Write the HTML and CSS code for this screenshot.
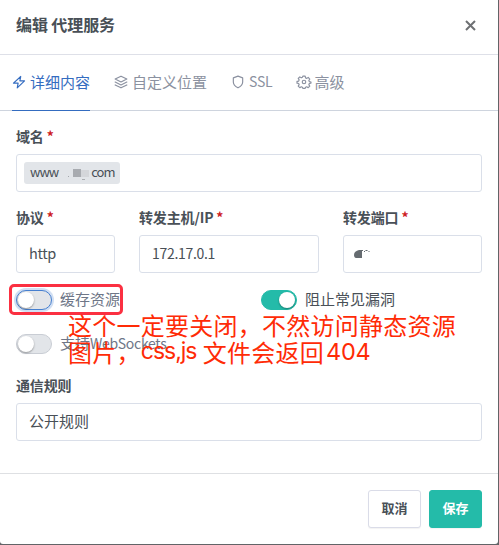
FILE: index.html
```html
<!DOCTYPE html>
<html lang="zh-CN">
<head>
    <meta charset="UTF-8">
    <meta name="viewport" content="width=device-width, initial-scale=1.0">
    <title>编辑 代理服务</title>
    <link rel="stylesheet" href="styles.css">
</head>
<body>
    <div class="modal">
        <div class="modal-header">
            <h1>编辑 代理服务</h1>
            <button class="close" aria-label="关闭">
                <svg width="11" height="11" viewBox="0 0 11 11"><path d="M1 1l9 9M10 1l-9 9"/></svg>
            </button>
        </div>

        <div class="tabs">
            <a class="tab active">
                <svg class="icon" viewBox="0 0 24 24"><path d="M15 2.5L2.5 14H10.500L9 22L21.500 10H13.500Z"/></svg>
                <span>详细内容</span>
            </a>
            <a class="tab">
                <svg class="icon" viewBox="0 0 24 24"><path d="M12 2L2 7l10 5 10-5zM2 12l10 5 10-5M2 17l10 5 10-5"/></svg>
                <span>自定义位置</span>
            </a>
            <a class="tab">
                <svg class="icon" viewBox="0 0 24 24"><path d="M12 22s8-4 8-10V5l-8-3-8 3v7c0 6 8 10 8 10z"/></svg>
                <span class="ssl">SSL</span>
            </a>
            <a class="tab">
                <svg class="icon gear" viewBox="0 0 24 24"><circle cx="12" cy="12" r="3"/><path d="M10 2h4l.7 2.9 2 .9 2.5-1.6 2.7 2.8-1.6 2.4.8 2L24 12l-.1 2-2.8.6-.8 2 1.6 2.4-2.7 2.8-2.5-1.6-2 .8L14 23h-4l-.7-2-2-.8-2.5 1.6L2.1 19l1.6-2.4-.8-2L0 14v-3l2.9-.6.8-2L2.1 6l2.7-2.8 2.5 1.6 2-.8z"/></svg>
                <span>高级</span>
            </a>
        </div>

        <div class="modal-body">
            <label class="label">域名 <span class="required">*</span></label>
            <div class="input tags">
                <span class="tag">
                    <span>www</span>
                    <svg width="34" height="18" viewBox="0 0 34 18">
                        <path d="M11 12h1v1h-1z" fill="#a3a7ac"/>
                        <path d="M16 5h8v8h-8z" fill="#a8abb0"/>
                        <path d="M24 6h8v7h-8z" fill="#d4d6da"/>
                        <path d="M25 15h3v1h-3z" fill="#aaadb1"/>
                    </svg>
                    <span>com</span>
                </span>
            </div>

            <div class="row">
                <div>
                    <label class="label">协议 <span class="required">*</span></label>
                    <div class="input select"><span class="http">http</span></div>
                </div>
                <div>
                    <label class="label">转发主机/IP <span class="required">*</span></label>
                    <div class="input"><span class="host">172.17.0.1</span></div>
                </div>
                <div>
                    <label class="label">转发端口 <span class="required">*</span></label>
                    <div class="input port">
                        <svg width="18" height="10" viewBox="0 0 18 10">
                            <path d="M0 6c0-3 2-4 5-5h3v8H2C1 9 0 8 0 6z" fill="#656b70"/>
                            <path d="M8 1.5h1M10 2.5h1M11.5 1.5h2M14.5 2l1 1" stroke="#656b70"/>
                        </svg>
                    </div>
                </div>
            </div>

            <div class="switches">
                <div class="switch focus"><i class="track"></i><span>缓存资源</span></div>
                <div class="switch on"><i class="track"></i><span>阻止常见漏洞</span></div>
                <div class="switch"><i class="track"></i><span>支持<span class="ws">WebSockets</span></span></div>
            </div>

            <label class="label">通信规则</label>
            <div class="input select"><span>公开规则</span></div>
        </div>

        <div class="modal-footer">
            <button class="btn"><span>取消</span></button>
            <button class="btn btn-save"><span>保存</span></button>
        </div>

        <!-- notes drawn over the form -->
        <div class="mark"></div>
        <div class="note">
            <div class="note-line">这个一定要关闭，不然访问静态资源</div>
            <div class="note-line second"><span>图片，</span><span class="latin css">css,js</span><span>文件会返回</span><span class="latin">404</span></div>
        </div>
    </div>
</body>
</html>
```
FILE: styles.css
```css
* {
    box-sizing: border-box;
}
body {
    margin: 0;
    height: 545px;
    overflow: hidden;
    background-color: #626467;
    color: #495057;
    font-family: 'Noto Sans CJK SC', sans-serif;
    font-size: 15px;
}
.modal {
    position: relative;
    width: 498px;
    height: 544px;
    background-color: #fff;
    border-radius: 0 0 3px 3px;
}
.modal-header {
    display: flex;
    align-items: center;
    justify-content: space-between;
    height: 55px;
    padding: 0 22px 4px 16px;
    border-bottom: 1px solid #dee0e8;
}
h1 {
    margin: 0 0 2px;
    font-size: 16px;
    font-weight: 700;
    letter-spacing: -0.1px;
    line-height: 24px;
}
.close {
    display: flex;
    padding: 0;
    border: none;
    background: none;
}
.close svg {
    fill: none;
    stroke: #6e7073;
    stroke-width: 2;
}
.tabs {
    display: flex;
    gap: 24px;
    height: 56px;
    padding-left: 12px;
    border-bottom: 1px solid #ced4de;
}
.tab {
    display: flex;
    align-items: center;
    gap: 4px;
    height: 56px;
    padding-bottom: 4px;
    color: #8b91a0;
    white-space: nowrap;
}
.tab.active {
    color: #346cc0;
    border-bottom: 1px solid #346cc0;
    padding-bottom: 3px;
}
.ssl {
    font-size: 14px;
    letter-spacing: -0.2px;
}
.icon {
    width: 14px;
    height: 14px;
    margin-top: 2px;
    fill: none;
    stroke: currentColor;
    stroke-width: 2;
    stroke-linejoin: round;
    stroke-linecap: round;
}
.gear {
    overflow: visible;
}
.modal-body {
    height: 362px;
    padding: 16px 16px 0;
}
.label {
    display: block;
    height: 21px;
    margin-bottom: 6px;
    font-size: 14px;
    font-weight: 700;
    letter-spacing: -0.15px;
    line-height: 18px;
}
.required {
    color: #cd201f;
}
.input {
    display: flex;
    align-items: center;
    height: 38px;
    padding: 0 12px 2px;
    border: 1px solid #dadfe9;
    border-radius: 3px;
    font-size: 14px;
}
.select {
    padding-bottom: 3px;
    font-size: 15px;
}
.http {
    font-size: 14.5px;
    letter-spacing: -0.4px;
}
.host {
    letter-spacing: -0.3px;
}
.tags {
    padding: 0 7px;
}
.tag {
    display: flex;
    align-items: center;
    width: 96px;
    height: 22px;
    padding: 0 6px 3px;
    border-radius: 3px;
    background-color: #e2e5e9;
    font-size: 13px;
    letter-spacing: -1px;
}
.tag svg {
    margin: 3px 0 0 -1px;
    flex-shrink: 0;
}
.row {
    display: grid;
    grid-template-columns: 99px 180px 139px;
    gap: 24px;
    margin-top: 16px;
}
.port {
    padding: 0 10px;
}
.switches {
    display: grid;
    grid-template-columns: 245px 1fr;
    row-gap: 20px;
    margin: 15px 0 20px;
}
.switch {
    display: flex;
    align-items: center;
    gap: 8px;
    height: 24px;
    color: #6e7687;
}
.switch > span {
    margin-bottom: 3px;
}
.ws {
    font-size: 14px;
    letter-spacing: -0.3px;
}
.track {
    width: 36px;
    height: 20px;
    border: 1px solid #c9cdd4;
    border-radius: 10px;
    background-color: #e2e5e9;
}
.track::before {
    content: '';
    display: block;
    width: 16px;
    height: 16px;
    margin: 1px;
    border-radius: 50%;
    background-color: #fff;
    box-shadow: 0 1px 2px rgba(0, 0, 0, 0.35);
}
.focus .track {
    border-color: #467fcf;
    box-shadow: 0 0 0 2px rgba(70, 127, 207, 0.25);
}
.on {
    color: #495057;
}
.on .track {
    border-color: #24bba9;
    background-color: #24bba9;
}
.on .track::before {
    margin-left: 17px;
}
.modal-footer {
    display: flex;
    gap: 8px;
    justify-content: flex-end;
    height: 71px;
    padding: 16px;
    border-top: 1px solid #dee0e3;
}
.btn {
    width: 53px;
    height: 38px;
    padding: 0 0 3px;
    border: 1px solid #dadce8;
    border-radius: 3px;
    background-color: #fff;
    box-shadow: 0 1px 1px rgba(0, 0, 0, 0.05);
    color: #495057;
    font-family: inherit;
    font-size: 13px;
    font-weight: 700;
}
.btn-save {
    border-color: #24bba9;
    background-color: #24bba9;
    color: #fff;
}
.mark {
    position: absolute;
    left: 9px;
    top: 284px;
    width: 114px;
    height: 31px;
    border: 3px solid #fb3041;
    border-radius: 5px;
}
.note {
    position: absolute;
    left: 68px;
    top: 311px;
    color: #ff2b06;
    font-size: 24px;
    letter-spacing: 0.25px;
    line-height: 27px;
    white-space: nowrap;
}
.second {
    display: flex;
}
.latin {
    margin-left: 2px;
    font-family: Inter, sans-serif;
    font-size: 23.5px;
    letter-spacing: -0.3px;
}
.css {
    width: 62px;
    margin-left: 0;
    font-size: 23px;
    letter-spacing: -1px;
}
```
